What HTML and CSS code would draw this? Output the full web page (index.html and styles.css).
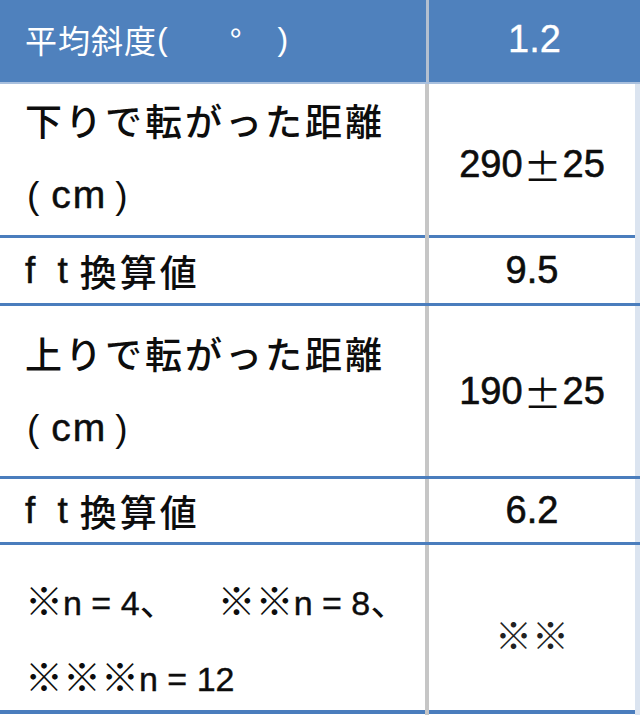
FILE: index.html
```html
<!DOCTYPE html>
<html lang="ja">
<head>
<meta charset="utf-8">
<link rel="stylesheet" href="styles.css">
</head>
<body>
<div class="table">
  <div class="row head">
    <div class="label">平均斜度<span class="lat">(</span><span class="deg">°</span><span class="lat">)</span></div>
    <div class="val">1.2</div>
  </div>
  <div class="row r1">
    <div class="label two"><span>下りで転がった距離</span><span><span class="lat po">(</span><span class="lat cm">cm</span><span class="lat pc">)</span></span></div>
    <div class="val">290<span class="pm">±</span>25</div>
  </div>
  <div class="row r2">
    <div class="label"><span class="lat ft">f t</span>換算値</div>
    <div class="val">9.5</div>
  </div>
  <div class="row r3">
    <div class="label two"><span>上りで転がった距離</span><span><span class="lat po">(</span><span class="lat cm">cm</span><span class="lat pc">)</span></span></div>
    <div class="val">190<span class="pm">±</span>25</div>
  </div>
  <div class="row r4">
    <div class="label"><span class="lat ft">f t</span>換算値</div>
    <div class="val">6.2</div>
  </div>
  <div class="row r5">
    <div class="label two note"><span>※<span class="lat">n = 4</span>、<span class="gap"></span>※※<span class="lat">n = 8</span>、</span><span>※※※<span class="lat">n = 12</span></span></div>
    <div class="val marks">※※</div>
  </div>
</div>
</body>
</html>
```
FILE: styles.css
```css
html, body {
  margin: 0;
  padding: 0;
  background: #ffffff;
}

.table {
  width: 640px;
  height: 716px;
  display: flex;
  flex-direction: column;
  font-family: "Noto Sans CJK JP", sans-serif;
  color: #0d0d0d;
}

.row {
  display: grid;
  grid-template-columns: 429px 1fr;
  box-sizing: border-box;
  border-bottom: 3px solid #4a7dbd;
  flex: none;
}

.row.head {
  height: 84px;
  background: #4f81bd;
  color: #ffffff;
  border-bottom: 2px solid #a9c0de;
}

.r1 { height: 154px; }
.r2 { height: 68px; }
.r3 { height: 173px; }
.r4 { height: 66px; }
.r5 { height: 169px; border-bottom-width: 4px; }

.r1 .label { padding-bottom: 12px; }
.r5 .label { padding-top: 18px; }
.r5 .val { padding-top: 8px; }

.label {
  display: flex;
  align-items: center;
  padding-left: 25px;
  border-right: 4px solid #c6c6c6;
  font-size: 37px;
  font-weight: 500;
  letter-spacing: 3px;
  white-space: nowrap;
}

.head .label {
  font-size: 32px;
  letter-spacing: 1px;
  font-weight: 400;
  padding-bottom: 4px;
  border-right: 3px solid #b4c0d0;
}

.label.two {
  flex-direction: column;
  align-items: flex-start;
  justify-content: center;
  line-height: 72px;
}

.val {
  display: flex;
  align-items: center;
  justify-content: center;
  font-family: "Liberation Sans", Arial, sans-serif;
  font-size: 38px;
  color: #0d0d0d;
  -webkit-text-stroke: 0.6px #0d0d0d;
  border-right: 5px solid #dbe4f0;
  white-space: nowrap;
}

.head .val {
  color: #ffffff;
  -webkit-text-stroke: 0.3px #ffffff;
  border-right: none;
  padding-bottom: 4px;
}

.lat {
  font-family: "Liberation Sans", Arial, sans-serif;
  letter-spacing: 0;
}

.deg {
  margin: 0 36px 0 62px;
  letter-spacing: 0;
}

.po {
  margin-left: 2px;
  margin-right: 12px;
  font-weight: 400;
}

.pc {
  margin-left: 8px;
  font-weight: 400;
}

.cm {
  font-size: 39px;
  letter-spacing: 2px;
  -webkit-text-stroke: 0.5px #0d0d0d;
}

.ft {
  letter-spacing: 6px;
  margin-right: 6px;
  -webkit-text-stroke: 0.5px #0d0d0d;
}

.pm {
  display: inline-block;
  width: 40px;
  text-align: center;
  font-family: "Noto Sans CJK JP", sans-serif;
  font-weight: 400;
  -webkit-text-stroke: 0;
}

.note {
  letter-spacing: 0;
  font-weight: 400;
  font-size: 38px;
}

.note .lat {
  font-size: 34px;
  letter-spacing: 0;
  -webkit-text-stroke: 0.4px #0d0d0d;
}

.gap {
  display: inline-block;
  width: 40px;
}

.marks {
  font-family: "Noto Sans CJK JP", sans-serif;
  font-size: 37px;
  -webkit-text-stroke: 0;
  color: #222222;
}
```
